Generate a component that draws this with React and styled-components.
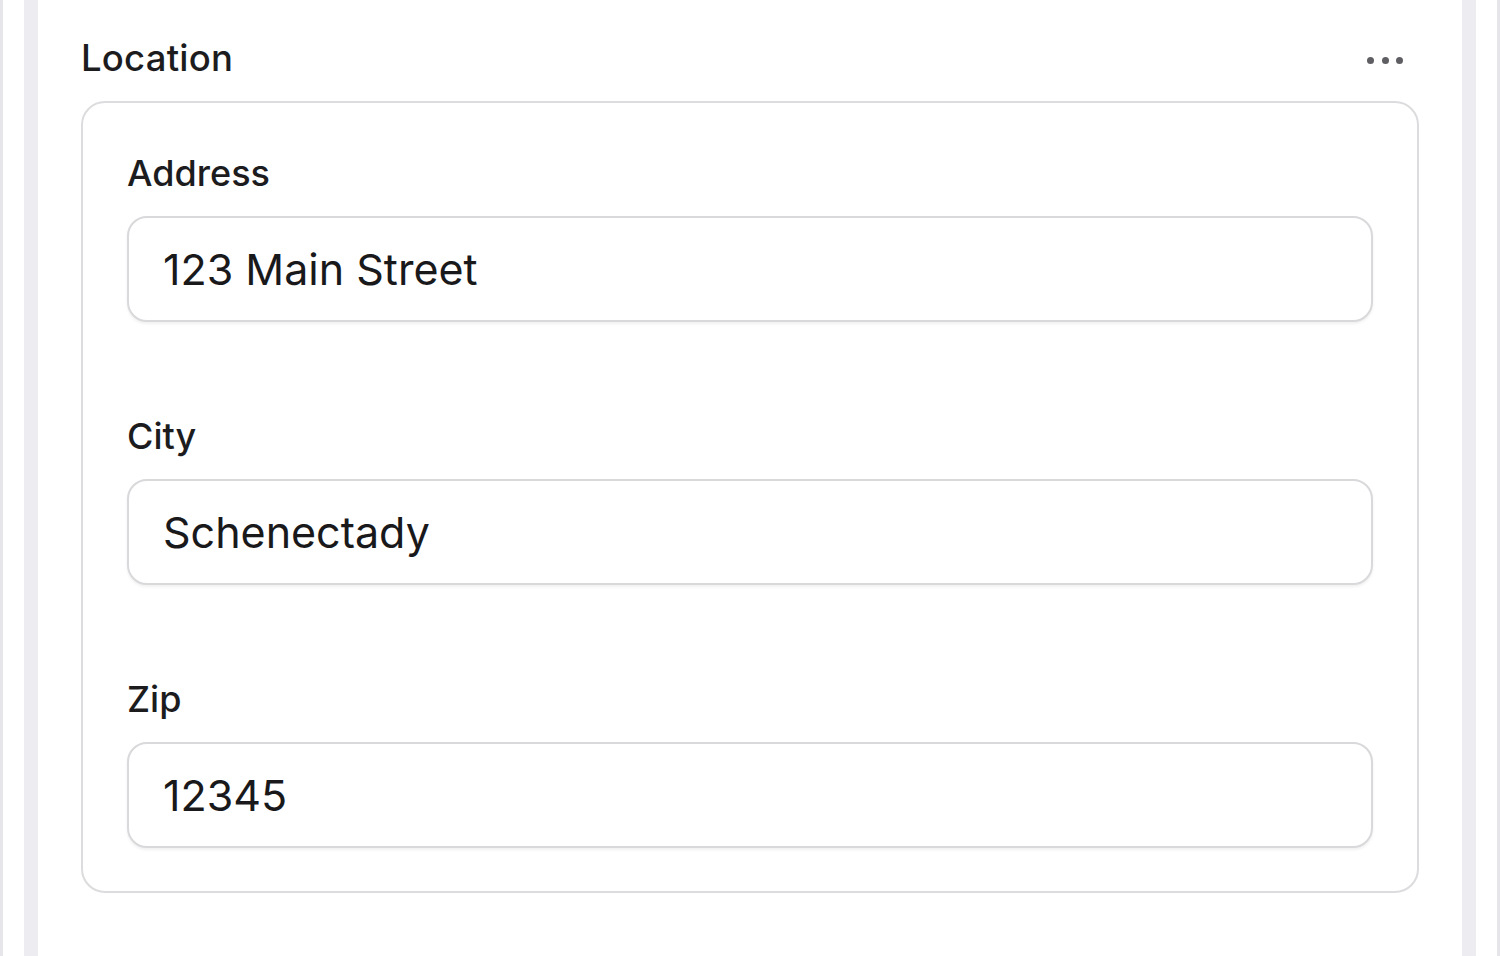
import React from 'react';
import styled, { createGlobalStyle } from 'styled-components';

const GlobalStyle = createGlobalStyle`
  html, body {
    margin: 0;
    padding: 0;
    background: #ffffff;
    font-family: Inter, "Noto Sans", "Liberation Sans", sans-serif;
    color: #1c1c1e;
  }
  * {
    box-sizing: border-box;
  }
`;

const Page = styled.div`
  height: 956px;
  overflow: hidden;
  display: flex;
  padding: 0 24px;
  border-left: 3px solid #e6e6ea;
  border-right: 3px solid #e6e6ea;
  background: #ffffff;
`;

const Panel = styled.section`
  flex: 1;
  display: flex;
  flex-direction: column;
  padding: 30px 43px 0;
  background: #ffffff;
  border-left: 14px solid #ededf1;
  border-right: 14px solid #ededf1;
  margin-left: -3px;
  margin-right: -3px;
`;

const SectionHeader = styled.div`
  display: flex;
  align-items: center;
  justify-content: space-between;
  height: 56px;
  margin-bottom: 15px;
`;

const SectionTitle = styled.h2`
  margin: 0;
  font-size: 36.5px;
  font-weight: 500;
  letter-spacing: 0.2px;
  color: #1c1c1e;
`;

const MoreButton = styled.button`
  border: none;
  background: none;
  padding: 0;
  margin-right: 16px;
  margin-top: 4px;
  display: flex;
  gap: 7.5px;
  cursor: pointer;
`;

const Dot = styled.span`
  width: 7px;
  height: 7px;
  border-radius: 50%;
  background: #5f5f63;
`;

const Card = styled.div`
  border: 2px solid #dcdcdf;
  border-radius: 24px;
  padding: 49px 44px 43px;
  display: flex;
  flex-direction: column;
  gap: 93px;
`;

const Field = styled.div`
  display: flex;
  flex-direction: column;
`;

const Label = styled.label`
  font-size: 36px;
  font-weight: 500;
  line-height: 42px;
  margin-bottom: 22px;
  color: #1c1c1e;
`;

const Input = styled.input`
  height: 106px;
  border: 2px solid #d9d9dc;
  border-radius: 20px;
  padding: 0 34px;
  font-family: inherit;
  font-size: 43px;
  color: #19191b;
  background: #ffffff;
  box-shadow: 0 2px 3px rgba(0, 0, 0, 0.06);
  outline: none;
`;

const fields = [
  { id: 'address', label: 'Address', value: '123 Main Street' },
  { id: 'city', label: 'City', value: 'Schenectady' },
  { id: 'zip', label: 'Zip', value: '12345' },
];

export default function App() {
  return (
    <>
      <GlobalStyle />
      <Page>
        <Panel>
          <SectionHeader>
            <SectionTitle>Location</SectionTitle>
            <MoreButton type='button' aria-label='More'>
              <Dot />
              <Dot />
              <Dot />
            </MoreButton>
          </SectionHeader>
          <Card>
            {fields.map((f) => (
              <Field key={f.id}>
                <Label htmlFor={f.id}>{f.label}</Label>
                <Input id={f.id} defaultValue={f.value} />
              </Field>
            ))}
          </Card>
        </Panel>
      </Page>
    </>
  );
}
